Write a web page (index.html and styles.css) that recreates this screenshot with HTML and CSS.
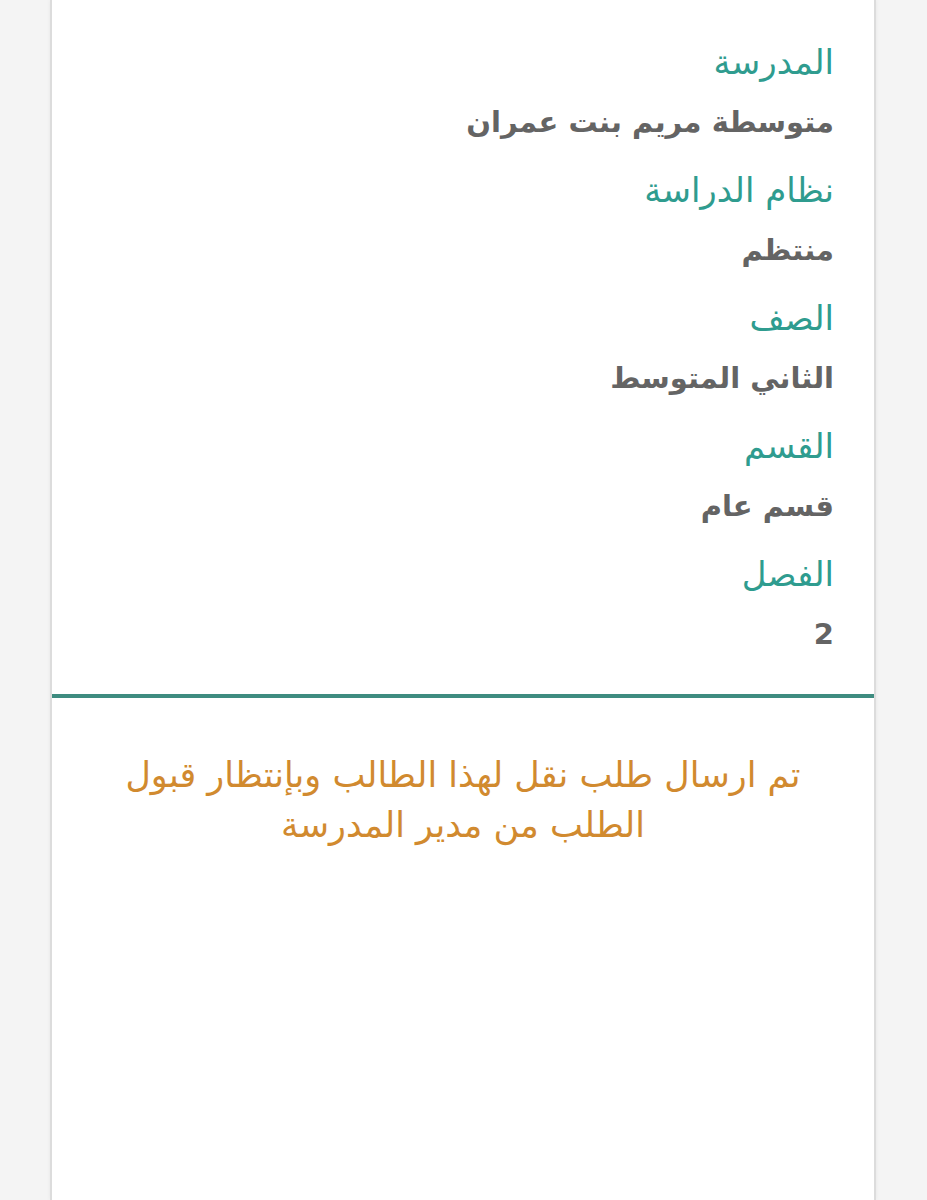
FILE: index.html
```html
<!DOCTYPE html>
<html lang="ar" dir="rtl">
<head>
    <meta charset="UTF-8">
    <meta name="viewport" content="width=device-width, initial-scale=1.0">
    <title>بيانات الطالب</title>
    <link rel="stylesheet" href="styles.css">
</head>
<body>

<div class="card">
    <div class="info">
        <div class="field">
            <div class="label">المدرسة</div>
            <div class="value">متوسطة مريم بنت عمران</div>
        </div>
        <div class="field">
            <div class="label">نظام الدراسة</div>
            <div class="value">منتظم</div>
        </div>
        <div class="field">
            <div class="label">الصف</div>
            <div class="value">الثاني المتوسط</div>
        </div>
        <div class="field">
            <div class="label">القسم</div>
            <div class="value">قسم عام</div>
        </div>
        <div class="field">
            <div class="label">الفصل</div>
            <div class="value">2</div>
        </div>
    </div>

    <div class="divider"></div>

    <p class="notice">تم ارسال طلب نقل لهذا الطالب وبإنتظار قبول الطلب من مدير المدرسة</p>
</div>

</body>
</html>
```

FILE: styles.css
```css
body {
    font-family: 'DejaVu Sans', 'Noto Sans', sans-serif;
    margin: 0;
    padding: 0;
    background: #f4f4f4;
    height: 1200px;
    overflow: hidden;
}
.card {
    background: #fff;
    margin: 0 51px 0 50px;
    height: 1200px;
    border-left: 2px solid #dcdcdc;
    border-right: 2px solid #dcdcdc;
    box-shadow: 0 0 4px rgba(0, 0, 0, 0.06);
}
.info {
    padding: 40px 40px 0 40px;
}
.field {
    margin-bottom: 24px;
}
.label {
    color: #2f9c8f;
    font-size: 34px;
    line-height: 44px;
}
.value {
    color: #646464;
    font-size: 29px;
    font-weight: bold;
    line-height: 44px;
    margin-top: 16px;
}
.divider {
    height: 4px;
    background: #3e8c80;
    margin-top: 38px;
}
.notice {
    color: #d18a2f;
    font-size: 35px;
    line-height: 50px;
    text-align: center;
    margin: 52px 60px 0 60px;
}
```
